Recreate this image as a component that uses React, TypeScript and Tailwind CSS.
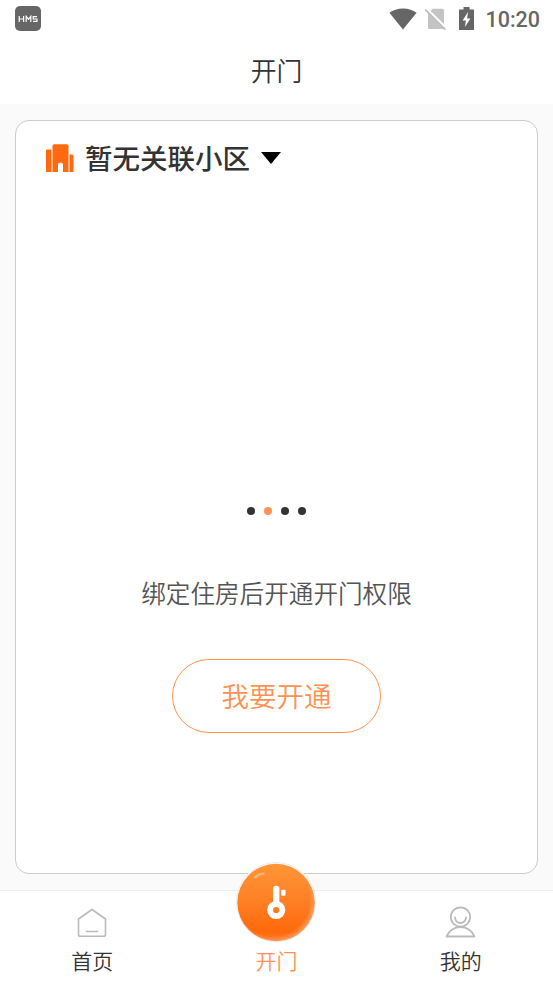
import { useState } from 'react';

const HmsBadge = () => (
  <div className="flex h-[25px] w-[26px] items-center justify-center rounded-[5px] bg-[#666]">
    <svg width="20" height="8" viewBox="0 0 20 8" fill="none" stroke="#fff" strokeWidth="1.2">
      <path d="M1.2 1v6M5.6 1v6M1.2 4h4.4M8.2 7V1.3l2.3 3 2.3-3V7M19 1.6h-3.8V4H19v2.4h-4" />
    </svg>
  </div>
);

const StatusBar = () => (
  <div className="flex h-[37px] items-center justify-between pl-[15px] pr-[13px]">
    <HmsBadge />
    <div className="flex items-center">
      <svg width="28" height="22" viewBox="0 0 28 22" fill="#666">
        <path d="M14 21.5 0.4 4.8C4 2 8.600 .4 14 .4s10 1.600 13.600 4.400z" />
      </svg>
      <svg className="ml-2" width="22" height="22" viewBox="0 0 22 22">
        <path d="M7.500 .8H17.500Q19 .8 19 2.300V21H4.500Q3 21 3 19.500V5.300z" fill="#c4c4c4" />
        <path d="M.2 0 22 21.800" stroke="#fff" strokeWidth="3.500" />
        <path d="M.2 1.500 20.400 21.700" stroke="#bbb" strokeWidth="1.700" />
      </svg>
      <svg className="ml-[12px]" width="15" height="23" viewBox="0 0 15 23">
        <path d="M4.500 0h6v2.500H15V23H0V2.500h4.500z" fill="#666" />
        <path d="M9 5 3.600 13.500h3.200L6 20l5.400-8.500H8.200z" fill="#fff" />
      </svg>
      <span className="ml-[11px] mt-[2px] text-[21.500px] leading-6 font-medium text-[#666]">10:20</span>
    </div>
  </div>
);

const BuildingIcon = () => (
  <svg className="-mt-[2px]" width="28" height="28" viewBox="0 0 28 28" fill="#ff6a10">
    <path d="M0 6.500Q0 5.500 1 5.500h4.500V28H0zM23.500 10.500H26q1.500 0 1.500 1.500v16h-4z" />
    <path d="M6.500 2q0-1.700 1.700-1.700h12.600q1.700 0 1.700 1.700v26H17v-7.500q0-2-2.500-2T12 20.500V28H6.500z" />
  </svg>
);

const HomeIcon = () => (
  <svg width="30" height="30" viewBox="0 0 30 30" fill="none" stroke="#bbb" strokeWidth="1.600" strokeLinejoin="round" strokeLinecap="round">
    <path d="M1.500 11 15 1.500 28.500 11v15.500q0 1.800-1.800 1.800H3.300q-1.800 0-1.800-1.800z" />
    <path d="M9.500 23.500h11" />
  </svg>
);

const UserIcon = () => (
  <svg width="32" height="32" viewBox="0 0 32 32" fill="none" stroke="#bbb" strokeWidth="1.800" strokeLinejoin="round" strokeLinecap="round">
    <circle cx="15.500" cy="11" r="9.700" />
    <path d="M10 11.500a5.500 5.500 0 0 0 11 0M1.500 30.500c2-5.600 7.500-9.500 14-9.500s12 3.900 14 9.500z" />
  </svg>
);

const KeyButton = () => (
  <svg width="80" height="80" viewBox="0 0 80 80">
    <defs>
      <linearGradient id="keyFill" x1="0" y1="0" x2="0" y2="1">
        <stop offset="0" stopColor="#ff9638" />
        <stop offset="0.450" stopColor="#ff8126" />
        <stop offset="0.880" stopColor="#ff680b" />
        <stop offset="1" stopColor="#ff7a28" />
      </linearGradient>
      <radialGradient id="keyRim" cx="0.460" cy="0.460" r="0.550">
        <stop offset="0.860" stopColor="#ffb27c" stopOpacity="0" />
        <stop offset="1" stopColor="#ffb27c" stopOpacity="0.650" />
      </radialGradient>
    </defs>
    <circle cx="40" cy="40" r="39.500" fill="#fff" stroke="#ddd" strokeWidth="0.600" />
    <circle cx="40" cy="40.500" r="38.700" fill="url(#keyFill)" />
    <circle cx="40" cy="40.500" r="38.700" fill="url(#keyRim)" />
    <path d="M19 15.500q4-3.600 8.500-3.900" fill="none" stroke="#ffb478" strokeWidth="2.400" strokeLinecap="round" />
    <path d="M37 42V27a3.200 3.200 0 0 1 6.400 0v15z" fill="#fff" />
    <circle cx="40.200" cy="48" r="6.100" fill="none" stroke="#fff" strokeWidth="6" />
    <rect x="45.200" y="27.700" width="4.300" height="6" rx="1" fill="#fff" />
  </svg>
);

const dots = ['bg-[#333]', 'bg-[#ff9252]', 'bg-[#333]', 'bg-[#333]'];

const tabs = [
  { key: 'home', label: '首页', icon: <HomeIcon /> },
  { key: 'door', label: '开门', icon: <KeyButton /> },
  { key: 'mine', label: '我的', icon: <UserIcon /> },
];

export default function App() {
  const [active, setActive] = useState('door');

  return (
    <div className="flex h-[983px] w-full flex-col bg-white font-[Roboto,'Noto_Sans_CJK_SC',sans-serif] text-[#333]">
      <StatusBar />
      <header className="flex h-[67px] items-center justify-center pt-[3px]">
        <h1 className="text-[25.800px] leading-[38px] font-[350]">开门</h1>
      </header>

      <main className="flex h-[786px] bg-[#fafafa] px-[15px] py-4">
        <section className="flex flex-1 flex-col items-center rounded-[14px] border border-[#ccc] bg-white">
          <button className="flex h-[75px] items-center self-start pl-[30px]">
            <BuildingIcon />
            <span className="ml-[11px] mt-[2px] text-[27.500px] leading-10 font-medium">暂无关联小区</span>
            <svg className="ml-[11px] -mt-[2px]" width="20" height="12" viewBox="0 0 20 12">
              <path d="M0 0h20L10 12z" />
            </svg>
          </button>

          <div className="mt-[311px] flex gap-[9px]">
            {dots.map((color, i) => (
              <span key={i} className={`h-2 w-2 rounded-full ${color}`} />
            ))}
          </div>
          <p className="mt-[62px] text-[24.600px] leading-9 font-[350] text-[#555]">绑定住房后开通开门权限</p>
          <button className="mt-[46px] h-[74px] w-[209px] rounded-full border border-[#ff9252] pt-[3px] text-[27.500px] font-[350] text-[#ff9252]">
            我要开通
          </button>
        </section>
      </main>

      <nav className="flex h-[93px] border-t border-[#f0f0f0] bg-white">
        {tabs.map((tab) => (
          <button
            key={tab.key}
            onClick={() => setActive(tab.key)}
            className="flex flex-1 flex-col items-center justify-end pb-[5px]"
          >
            <span className={`relative flex ${tab.key === 'door' ? 'mb-[5px]' : 'mb-[9px]'}`}>{tab.icon}</span>
            <span className={`text-[21px] leading-[31px] font-[350] ${active === tab.key ? 'text-[#ff9252]' : 'text-[#333]'}`}>
              {tab.label}
            </span>
          </button>
        ))}
      </nav>
    </div>
  );
}
